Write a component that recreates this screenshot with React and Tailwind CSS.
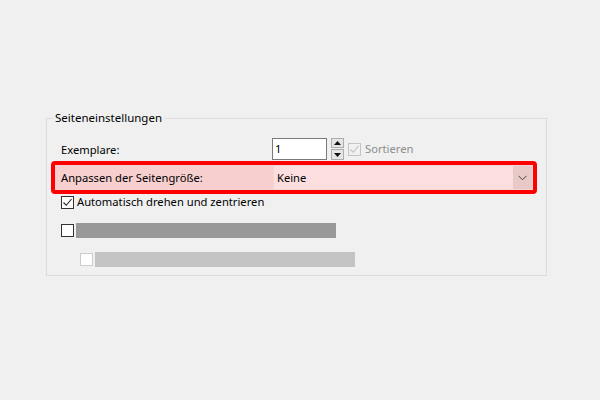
import React from "react";

function Check({ disabled }) {
  return (
    <div
      className={`w-[13px] h-[13px] border flex items-center justify-center shrink-0 ${
        disabled ? "border-[#c4c4c4] bg-[#f0f0f0]" : "border-[#333333] bg-white"
      }`}
    >
      <svg width="11" height="11" viewBox="0 0 11 11">
        <path
          d="M1.5 5.5 L4.3 8.3 L9.5 2"
          fill="none"
          stroke={disabled ? "#c0c0c0" : "#222222"}
          strokeWidth="1.1"
        />
      </svg>
    </div>
  );
}

export default function App() {
  return (
    <div
      className="w-[600px] h-[400px] bg-[#f0f0f0] pt-[118px] overflow-hidden text-[11.2px] text-black"
      style={{ fontFamily: '"Noto Sans", "Liberation Sans", sans-serif' }}
    >
      <div className="ml-[46px] w-[501px] h-[158px] border border-[#dcdcdc]">
        <div className="-mt-[9px] ml-[6px] px-[2px] w-fit bg-[#f0f0f0] leading-[16px] text-[11.5px]">
          Seiteneinstellungen
        </div>

        {/* Exemplare row */}
        <div className="mt-[12px] h-[22px] flex items-center pl-[14px]">
          <div className="w-[211px] leading-[16px] pt-[2px]">Exemplare:</div>
          <div className="w-[55px] h-[22px] border border-[#7a7a7a] bg-white flex items-center pl-[2px] leading-[16px] text-black">
            1
          </div>
          <div className="ml-[4px] flex flex-col gap-[1px]">
            <div className="w-[13px] h-[10px] border border-[#adadad] bg-[#e5e5e5] flex items-center justify-center">
              <svg width="7" height="4" viewBox="0 0 7 4">
                <path d="M0 4 L3.5 0 L7 4 Z" fill="#111" />
              </svg>
            </div>
            <div className="w-[13px] h-[11px] border border-[#adadad] bg-[#e5e5e5] flex items-center justify-center">
              <svg width="7" height="4" viewBox="0 0 7 4">
                <path d="M0 0 L3.5 4 L7 0 Z" fill="#111" />
              </svg>
            </div>
          </div>
          <div className="ml-[4px] flex items-center">
            <Check disabled />
            <span className="ml-[4px] text-[#8d8d8d] leading-[16px]">Sortieren</span>
          </div>
        </div>

        {/* Highlighted row */}
        <div className="mt-[1px] ml-[4px] w-[486px] h-[33px] border-[4px] border-[#ff0000] rounded-[4px] bg-[#f7cfcf] flex items-center">
          <div className="w-[218px] pl-[6px] leading-[16px]">Anpassen der Seitengröße:</div>
          <div className="flex-1 h-[25px] flex border border-[#f2d6d6] bg-[#fcdede]">
            <div className="flex-1 flex items-center pl-[3px] leading-[16px]">Keine</div>
            <div className="w-[19px] bg-[#e9c8c8] flex items-center justify-center">
              <svg width="9" height="6" viewBox="0 0 9 6">
                <path d="M0.5 0.8 L4.5 4.8 L8.5 0.8" fill="none" stroke="#444" strokeWidth="1" />
              </svg>
            </div>
          </div>
        </div>

        {/* Auto rotate */}
        <div className="mt-[1px] ml-[14px] h-[14px] flex items-center">
          <Check />
          <span className="ml-[3px] leading-[16px]">Automatisch drehen und zentrieren</span>
        </div>

        {/* Gray bar 1 */}
        <div className="mt-[14px] ml-[14px] h-[15px] flex items-center">
          <div className="w-[13px] h-[13px] border border-[#333333] bg-white" />
          <div className="ml-[2px] w-[260px] h-[15px] bg-[#999999]" />
        </div>

        {/* Gray bar 2 */}
        <div className="mt-[14px] ml-[33px] h-[15px] flex items-center">
          <div className="w-[13px] h-[13px] border border-[#cccccc] bg-white" />
          <div className="ml-[2px] w-[260px] h-[15px] bg-[#c3c3c3]" />
        </div>
      </div>
    </div>
  );
}
